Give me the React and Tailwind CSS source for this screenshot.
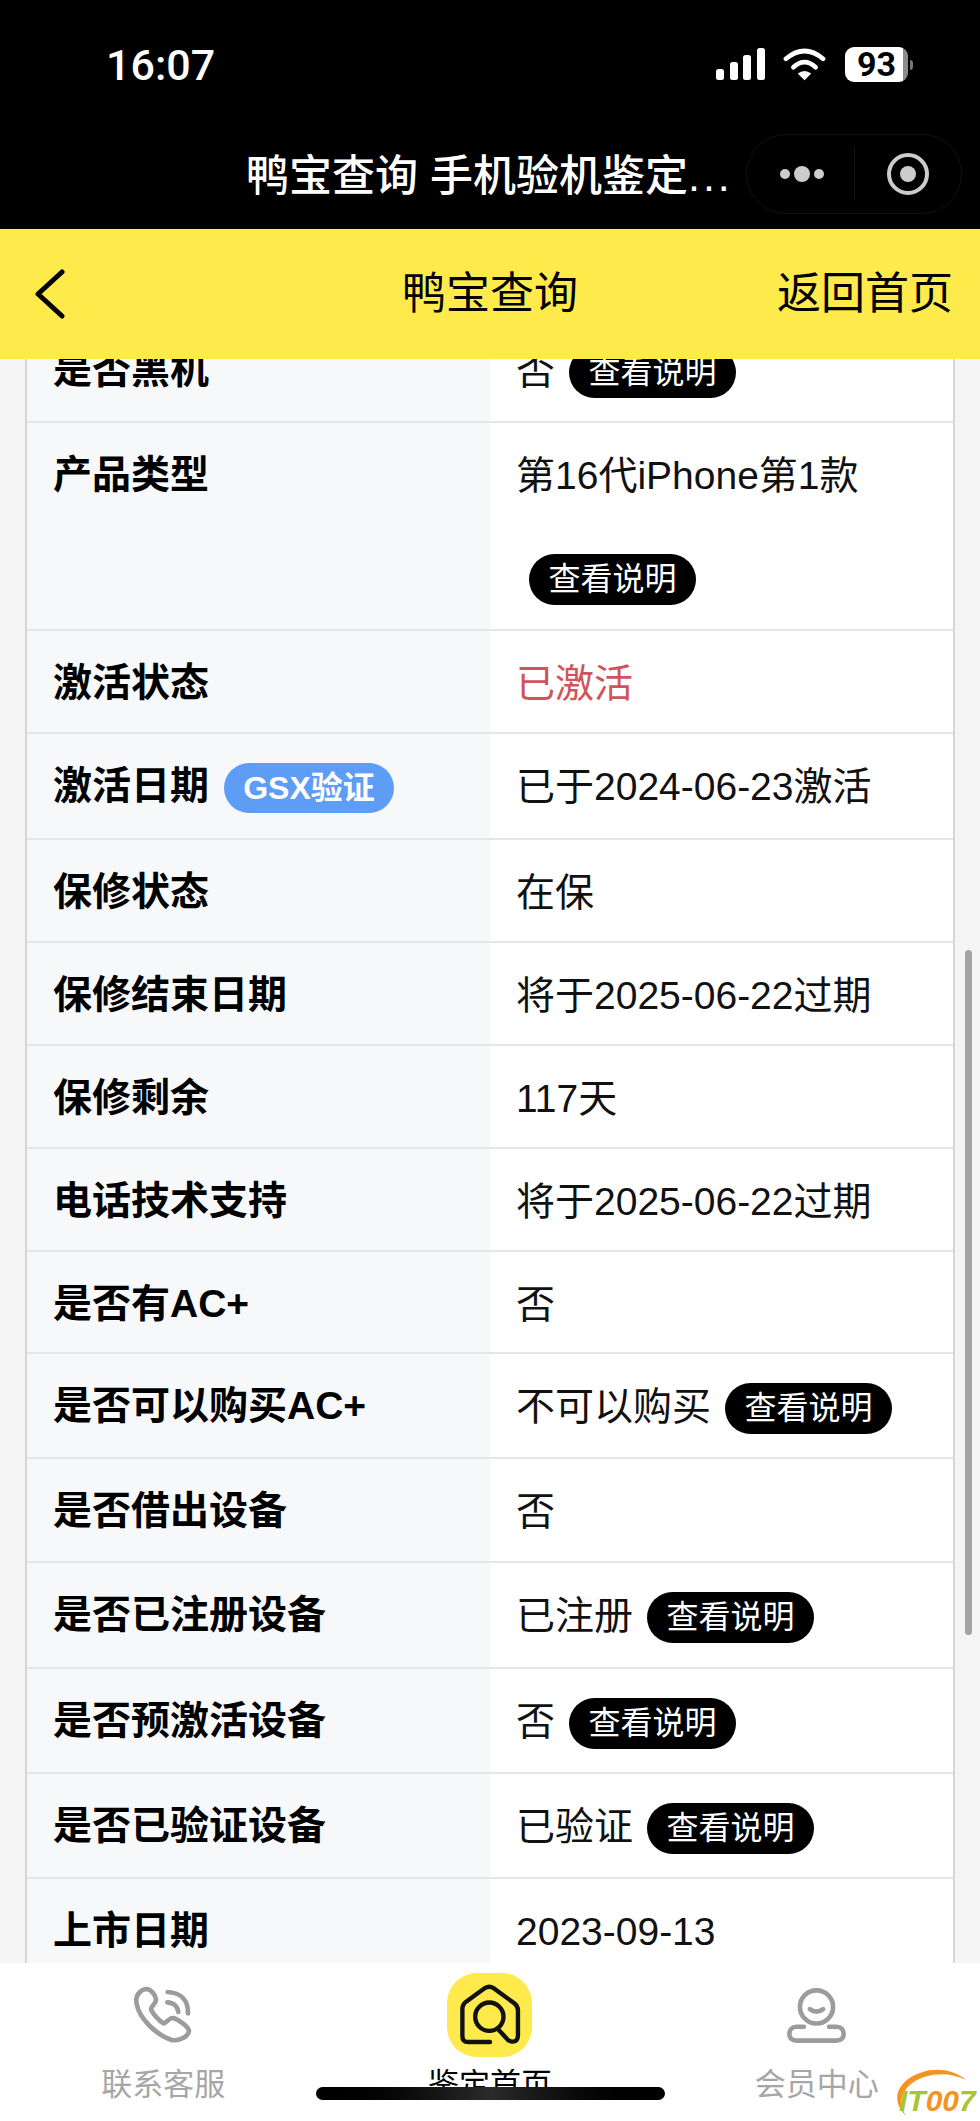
import React from "react";

const rows = [
  { h: "h-[105px]", label: "是否黑机", value: "否", tip: true },
  { h: "h-[208px]", label: "产品类型", value: "第16代iPhone第1款", tip: true, wrap: true },
  { h: "h-[103px]", label: "激活状态", value: "已激活", red: true },
  { h: "h-[106px]", label: "激活日期", value: "已于2024-06-23激活", gsx: true },
  { h: "h-[103px]", label: "保修状态", value: "在保" },
  { h: "h-[103px]", label: "保修结束日期", value: "将于2025-06-22过期" },
  { h: "h-[103px]", label: "保修剩余", value: "117天" },
  { h: "h-[103px]", label: "电话技术支持", value: "将于2025-06-22过期" },
  { h: "h-[102px]", label: "是否有AC+", value: "否" },
  { h: "h-[105px]", label: "是否可以购买AC+", value: "不可以购买", tip: true },
  { h: "h-[104px]", label: "是否借出设备", value: "否" },
  { h: "h-[106px]", label: "是否已注册设备", value: "已注册", tip: true },
  { h: "h-[105px]", label: "是否预激活设备", value: "否", tip: true },
  { h: "h-[105px]", label: "是否已验证设备", value: "已验证", tip: true },
  { h: "h-[105px]", label: "上市日期", value: "2023-09-13" },
];

const TipBadge = () => (
  <span className="inline-block h-[51px] w-[167px] ml-[14px] mb-[2px] rounded-full bg-black text-white text-center text-[32px] leading-[51px] align-middle">
    查看说明
  </span>
);

const Row = ({ h, label, value, tip, wrap, red, gsx }) => (
  <div className={`${h} grid grid-cols-[463px_463px] border-b-2 border-[#e6e6e6] overflow-hidden`}>
    <div className="bg-[#f7f8fa] pl-[26px] font-semibold leading-[104px] whitespace-nowrap">
      {label}
      {gsx && (
        <span className="inline-block h-[50px] w-[170px] ml-[15px] mb-[2px] rounded-full bg-[#5e9df6] text-white text-center text-[32px] leading-[50px] align-middle">
          GSX验证
        </span>
      )}
    </div>
    <div className={`bg-white pl-[26px] leading-[106px] ${red ? "text-[#cf555b]" : "text-[#111]"}`}>
      {value}
      {tip && !wrap && <TipBadge />}
      {wrap && (
        <div className="h-[103px] -ml-[1px] flex items-center">
          <TipBadge />
        </div>
      )}
    </div>
  </div>
);

const StatusBar = () => (
  <div className="h-[130px] flex items-start pl-[106px] pr-[67px] pt-[40px]">
    <span className="font-['Roboto',sans-serif] font-medium text-[43px] leading-[50px] text-white">16:07</span>
    <div className="ml-auto flex items-center mt-[7px]">
      <svg width="50" height="33" viewBox="0 0 50 33" fill="#fff">
        <rect x="0" y="21" width="8" height="11" rx="2.5" />
        <rect x="14" y="14" width="8" height="18" rx="2.5" />
        <rect x="27" y="7" width="8" height="25" rx="2.5" />
        <rect x="41" y="0" width="8" height="32" rx="2.5" />
      </svg>
      <svg className="ml-[17px]" width="43" height="33" viewBox="372 86 126 98" fill="none" stroke="#fff">
        <path d="M380 118Q435 72 490 118" strokeWidth="14" strokeLinecap="round" />
        <path d="M402 143Q435 113 468 143" strokeWidth="14" strokeLinecap="round" />
        <path d="M415 162Q435 146 455 162L435 182Z" fill="#fff" stroke="none" />
      </svg>
      <div className="ml-[19px] h-[35px] w-[63px] rounded-[9px] bg-[linear-gradient(90deg,#fff_92%,#8c8c8c_92%)] font-['Roboto',sans-serif] font-bold text-black text-[34px] leading-[35px] text-center">
        93
      </div>
      <div className="ml-[2px] h-[10px] w-[3px] rounded-r-full bg-[#777]" />
    </div>
  </div>
);

const TitleBar = () => (
  <div className="h-[99px] flex items-start pl-[246px]">
    <div className="mt-[19px] text-[43px] leading-[54px] font-medium text-white whitespace-nowrap w-[500px]">
      鸭宝查询 手机验机鉴定<span className="tracking-[3px]">...</span>
    </div>
    <div className="relative h-[80px] w-[216px] mt-[4px] rounded-full border border-[#111] flex items-center">
      <div className="w-[107px] flex items-center justify-center gap-[4px] pl-[3px]">
        <span className="w-[10px] h-[10px] rounded-full bg-[#ccc]" />
        <span className="w-[16px] h-[16px] rounded-full bg-[#ccc]" />
        <span className="w-[10px] h-[10px] rounded-full bg-[#ccc]" />
      </div>
      <div className="w-px h-[52px] bg-[#161616]" />
      <div className="flex-1 flex items-center justify-center pr-[1px]">
        <div className="w-[42px] h-[42px] rounded-full border-[4px] border-[#ccc] flex items-center justify-center">
          <span className="w-[16px] h-[16px] rounded-full bg-[#ccc]" />
        </div>
      </div>
    </div>
  </div>
);

const NavBar = () => (
  <div className="h-[130px] bg-[#ffea4b] flex items-center pl-[34px] pr-[27px] text-[44px] text-black">
    <svg width="31" height="50" viewBox="0 0 31 50" fill="none" stroke="#000" strokeWidth="5" strokeLinecap="round" strokeLinejoin="round">
      <path d="M28 3 4 25l24 22" />
    </svg>
    <div className="flex-1 text-center pl-[138px]">鸭宝查询</div>
    <div>返回首页</div>
  </div>
);

const PhoneIcon = () => (
  <svg width="58" height="58" viewBox="99 78 174 174" fill="none" stroke="#9c9c9c" strokeWidth="14" strokeLinecap="round" strokeLinejoin="round">
    <path d="M135 87C115 90 102 108 107 132C115 175 165 225 212 240C240 244 262 228 264 212C262 200 235 180 218 174C205 172 198 188 188 190C172 182 155 160 150 148C150 136 166 132 165 118C163 106 150 86 135 87Z" />
    <path d="M200 96C240 98 262 122 261 160" />
    <path d="M199 127C218 128 230 140 232 156" />
  </svg>
);

const HomeSearchIcon = () => (
  <svg width="64" height="64" viewBox="115 65 190 190" fill="none" stroke="#111" strokeWidth="13" strokeLinecap="round" strokeLinejoin="round">
    <path d="M210 240H145Q128 240 128 222V142Q128 128 140 120L195 80Q208 72 220 80L282 125Q293 133 293 146V220Q293 240 275 239Q265 238 258 228L232 200" />
    <circle cx="208" cy="165" r="42" />
  </svg>
);

const ProfileIcon = () => (
  <svg width="63" height="57" viewBox="165 78 190 172" fill="none" stroke="#9c9c9c" strokeWidth="14" strokeLinecap="round" strokeLinejoin="round">
    <circle cx="260" cy="138" r="50" />
    <path d="M240 145Q260 160 280 145" />
    <path d="M222 198H200C186 198 178 208 178 220C178 232 186 240 200 240H320C334 240 342 232 342 220C342 208 334 198 320 198H298" />
  </svg>
);

const TabBar = () => (
  <div className="relative h-[158px] bg-white grid grid-cols-3 pt-[10px] text-[31px] leading-[31px] text-[#a6a6a6]">
    <div className="flex flex-col items-center">
      <div className="h-[84px] flex items-center justify-center">
        <PhoneIcon />
      </div>
      <div className="mt-[12px]">联系客服</div>
    </div>
    <div className="flex flex-col items-center">
      <div className="w-[85px] h-[84px] rounded-[30px] bg-[#ffea4b] flex items-center justify-center">
        <HomeSearchIcon />
      </div>
      <div className="mt-[12px] text-black">鉴定首页</div>
    </div>
    <div className="flex flex-col items-center">
      <div className="h-[84px] flex items-center justify-center">
        <ProfileIcon />
      </div>
      <div className="mt-[12px]">会员中心</div>
    </div>

    {/* home indicator */}
    <div className="absolute left-[316px] top-[124px] w-[349px] h-[13px] rounded-full bg-linear-to-r from-black via-[#2a2a2a] to-black" />

    {/* watermark */}
    <div className="absolute left-[890px] top-[104px] w-[90px] h-[54px]">
      <svg className="absolute left-0 top-0" width="90" height="54" viewBox="890 2067 90 54" fill="#f39322">
        <path d="M906 2116C894 2104 894 2090 908 2079C925 2067 950 2066 966 2080C948 2071 925 2073 911 2084C900 2093 899 2105 906 2116Z" />
      </svg>
      <div className="absolute left-[9px] top-[17px] font-bold italic text-[30px] leading-[33px] whitespace-nowrap">
        <span className="text-[#a5c72d]">IT</span>
        <span className="text-[#f39322]">00</span>
        <span className="text-[#a5c72d]">7</span>
      </div>
    </div>
  </div>
);

const App = () => {
  return (
    <div className="w-[980px] h-[2121px] flex flex-col overflow-hidden bg-[#f5f5f5] font-['Liberation_Sans','Noto_Sans_CJK_SC',sans-serif] text-[39px]">
      <div className="h-[229px] bg-black">
        <StatusBar />
        <TitleBar />
      </div>
      <NavBar />
      <div className="relative flex-1 overflow-hidden">
        <div className="-mt-[41px] ml-[25px] w-[930px] border-x-2 border-[#d6d6d6] text-black">
          {rows.map((row) => (
            <Row key={row.label} {...row} />
          ))}
        </div>
        {/* scroll bar */}
        <div className="absolute left-[965px] top-[591px] w-[7px] h-[685px] rounded-full bg-[#a3a3a3]" />
      </div>
      <TabBar />
    </div>
  );
};

export default App;
